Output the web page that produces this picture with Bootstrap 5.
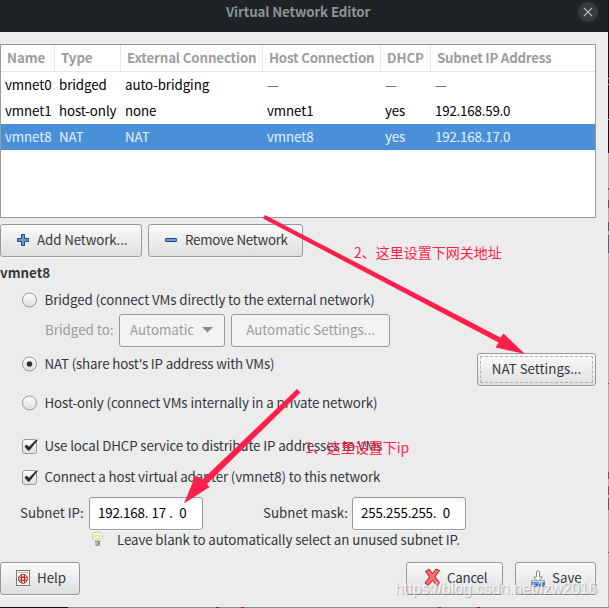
<!DOCTYPE html>
<html lang="en">
<head>
<meta charset="utf-8">
<meta name="viewport" content="width=device-width, initial-scale=1">
<title>Virtual Network Editor</title>
<link href="https://cdn.jsdelivr.net/npm/bootstrap@5.3.0/dist/css/bootstrap.min.css" rel="stylesheet">
<style>
  body { width: 609px; height: 608px; background: #ececec; color: #33393b; font-family: "Noto Sans CJK SC", sans-serif; font-size: 13.33px; line-height: 20px; white-space: nowrap; }
  .titlebar { height: 32px; background: #1f2226; color: #8b9396; padding: 0 0 8px 226px; letter-spacing: -.14px; }
  .close-btn { top: 2px; right: 11px; width: 20px; height: 20px; }
  .close-btn svg { display: block; }
  .main-area { padding-top: 12px; }
  .net-frame { width: 596px; height: 174px; background: #fff; border: 1px solid #999; }
  .net-table { table-layout: fixed; width: 594px; border-collapse: separate; border-spacing: 0; color: #000; letter-spacing: -.1px; }
  .net-table th { height: 27px; padding: 0 0 0 6px; color: #9b9d9e; border-right: 1px solid #e6e6e6; border-bottom: 1px solid #e6e6e6; }
  .net-table th:nth-child(3) { letter-spacing: -.16px; }
  .net-table th:nth-child(4) { letter-spacing: -.22px; }
  .net-table th:last-child { border-right: 0; letter-spacing: -.26px; }
  .net-table td { height: 26px; padding: 0 0 0 4px; }
  .net-table td:last-child { letter-spacing: -.2px; }
  .net-table td.unset { color: #555; }
  .net-table .picked td { background: #4a90d9; color: #e3f0ff; }
  .toolbar-row { gap: 6px; margin-top: 6px; }
  .gtk-btn { --bs-btn-padding-x: 0; --bs-btn-padding-y: 0; --bs-btn-font-size: 13.33px; --bs-btn-line-height: 20px; --bs-btn-color: #33393b; --bs-btn-border-color: #999; --bs-btn-border-radius: 3px; height: 33px; padding-bottom: 2px; background: linear-gradient(#fafafa, #dfdfdf); box-shadow: 0 1px #f8f8f8; }
  .gtk-off { background: #f3f3f3; color: #999c9d; box-shadow: none; }
  .w-add { width: 142px; letter-spacing: -.12px; } .w-remove { width: 155px; letter-spacing: -.27px; }
  .w-auto-sel { width: 106px; padding: 0 11px 2px 10px; } .w-auto-set { width: 159px; }
  .w-nat { width: 119px; padding: 0; } .w-help { width: 80px; } .w-cancel { width: 97px; letter-spacing: -.25px; } .w-save { width: 81px; margin-left: 12px; }
  .focus-dash { border: 1px dashed #b4b4b4; border-radius: 1px; margin: 2px; height: 27px; line-height: 23px; }
  .btn-glyph { margin: 1px 7px 0 15px; flex: none; }
  .cancel-glyph { margin: -1px 6px 0 17px; flex: none; }
  .opt-row { height: 22px; padding-left: 22px; gap: 6.5px; letter-spacing: -.13px; }
  .opt-row svg { display: block; width: 16px; height: 16px; overflow: visible; }
  .bridged-opt { letter-spacing: -.1px; }
  .group-title { height: 32px; }
  .bridge-row { margin-top: 3px; padding-left: 45px; height: 33px; gap: 6px; color: #999c9d; }
  .bridge-label { width: 68px; padding-bottom: 2px; }
  .nat-row { margin-top: 6px; height: 33px; width: 596px; }
  .nat-opt { letter-spacing: -.17px; }
  .host-row { margin-top: 6px; letter-spacing: -.09px; }
  .dhcp-row { margin-top: 21px; }
  .adapter-row { margin-top: 9px; }
  .subnet-row { margin-top: 9px; height: 33px; padding-left: 20px; }
  .ip-box { width: 114px; height: 33px; border: 1px solid #999; border-radius: 3px; background: linear-gradient(#f5f5f5, #fff 7px); color: #000; padding-left: 8px; white-space: pre; line-height: 29px; letter-spacing: -.2px; word-spacing: .5px; box-shadow: 0 1px #f8f8f8; }
  .ip-label { width: 69px; padding-bottom: 2px; } .mask-label { width: 89px; margin-left: 60px; padding-bottom: 2px; }
  .hint-row { height: 21px; padding: 0 0 2px 91px; letter-spacing: -.11px; }
  .hint-row svg { width: 13px; height: 16px; margin: -2px 13px 0 0; }
  .action-row { margin-top: 11px; width: 596px; }
  .overlay { left: 0; top: 0; pointer-events: none; }
  .note { color: #ff1f4b; font-size: 14px; line-height: 20px; }
  .note-gateway { left: 354px; top: 242px; }
  .note-ip { left: 305px; top: 437px; }
  .blog-stamp { left: 395px; top: 579px; font-family: "Liberation Sans", sans-serif; font-size: 15.7px; color: rgba(255,255,255,.78); text-shadow: 1px 1px 1px rgba(0,0,0,.25); }
</style>
<script src="https://cdn.jsdelivr.net/npm/bootstrap@5.3.0/dist/js/bootstrap.bundle.min.js"></script>
</head>
<body class="position-relative overflow-hidden">
<header class="titlebar position-relative d-flex align-items-center fw-bold">
  <span>Virtual Network Editor</span>
  <span class="close-btn position-absolute">
    <svg width="20" height="20"><circle cx="10" cy="10" r="10" fill="#363a3e"/><path d="M6 6l8 8M14 6l-8 8" stroke="#b5b9bb" stroke-width="1.1"/></svg>
  </span>
</header>
<main class="main-area">
  <div class="net-frame">
    <table class="net-table">
      <colgroup><col style="width:54px"><col style="width:66px"><col style="width:142px"><col style="width:118px"><col style="width:50px"><col></colgroup>
      <thead><tr><th>Name</th><th>Type</th><th>External Connection</th><th>Host Connection</th><th>DHCP</th><th>Subnet IP Address</th></tr></thead>
      <tbody>
        <tr><td>vmnet0</td><td>bridged</td><td>auto-bridging</td><td class="unset">—</td><td class="unset">—</td><td class="unset">—</td></tr>
        <tr><td>vmnet1</td><td>host-only</td><td>none</td><td>vmnet1</td><td>yes</td><td>192.168.59.0</td></tr>
        <tr class="picked"><td>vmnet8</td><td>NAT</td><td>NAT</td><td>vmnet8</td><td>yes</td><td>192.168.17.0</td></tr>
      </tbody>
    </table>
  </div>
  <div class="toolbar-row d-flex">
    <button class="btn gtk-btn w-add d-flex align-items-center"><svg class="btn-glyph" width="14" height="14"><path d="M5.500 1.500h3v4h4v3h-4v4h-3v-4h-4v-3h4z" fill="#6f9bd0" stroke="#204a87"/></svg>Add Network...</button>
    <button class="btn gtk-btn w-remove d-flex align-items-center"><svg class="btn-glyph" width="14" height="14"><rect x="1.500" y="5.500" width="11" height="3" rx=".5" fill="#6f9bd0" stroke="#204a87"/></svg>Remove Network</button>
  </div>
  <div class="group-title d-flex align-items-center fw-bold">vmnet8</div>
  <div class="opt-row bridged-opt d-flex align-items-center">
    <svg viewBox="0 0 16 16"><defs><linearGradient id="knob" x2="0" y2="1"><stop stop-color="#fff"/><stop offset="1" stop-color="#ddd"/></linearGradient></defs><circle cx="7.500" cy="8" r="7" fill="url(#knob)" stroke="#999"/></svg>
    <span>Bridged (connect VMs directly to the external network)</span>
  </div>
  <div class="bridge-row d-flex align-items-center">
    <span class="bridge-label">Bridged to:</span>
    <button class="btn gtk-btn gtk-off w-auto-sel d-flex align-items-center justify-content-between">Automatic<svg width="11" height="6"><path d="M0 0h11L5.500 5.500z" fill="#888d8e"/></svg></button>
    <button class="btn gtk-btn gtk-off w-auto-set">Automatic Settings...</button>
  </div>
  <div class="nat-row d-flex justify-content-between">
    <div class="opt-row nat-opt d-flex align-items-center">
      <svg viewBox="0 0 16 16"><circle cx="7.500" cy="8" r="7" fill="url(#knob)" stroke="#999"/><circle cx="7.500" cy="8" r="2.800" fill="#2b3032"/></svg>
      <span>NAT (share host's IP address with VMs)</span>
    </div>
    <button class="btn gtk-btn w-nat"><div class="focus-dash">NAT Settings...</div></button>
  </div>
  <div class="opt-row host-row d-flex align-items-center">
    <svg viewBox="0 0 16 16"><circle cx="7.500" cy="8" r="7" fill="url(#knob)" stroke="#999"/></svg>
    <span>Host-only (connect VMs internally in a private network)</span>
  </div>
  <div class="opt-row dhcp-row d-flex align-items-center">
    <svg viewBox="0 0 16 16"><rect x=".5" y="1.500" width="14" height="14" rx="2.500" fill="url(#knob)" stroke="#999"/><path d="M2.500 8.500l2-1.900L7 8.800 14 1.800h2L7.500 12.500H5.800z" fill="#2b3032"/></svg>
    <span>Use local DHCP service to distribute IP addresses to VMs</span>
  </div>
  <div class="opt-row adapter-row d-flex align-items-center">
    <svg viewBox="0 0 16 16"><rect x=".5" y="1.500" width="14" height="14" rx="2.500" fill="url(#knob)" stroke="#999"/><path d="M2.500 8.500l2-1.900L7 8.800 14 1.800h2L7.500 12.500H5.800z" fill="#2b3032"/></svg>
    <span>Connect a host virtual adapter (vmnet8) to this network</span>
  </div>
  <div class="subnet-row d-flex align-items-center">
    <span class="ip-label">Subnet IP:</span><div class="ip-box">192.168. 17 .  0</div>
    <span class="mask-label">Subnet mask:</span><div class="ip-box">255.255.255.  0</div>
  </div>
  <div class="hint-row d-flex align-items-center">
    <svg viewBox="0 0 13 16"><path d="M4 10C0 6 1 .8 6.500.8S13 6 9 10z" fill="#f6f5cf" stroke="#b9b9ae" stroke-width=".8"/><path d="M4.500 4.500h4L7.500 9h-2z" fill="#fffde0" stroke="#d9d27a" stroke-width=".8"/><path d="M4 10h5v3.500L7.500 15h-2L4 13.500z" fill="#8a8d88"/><path d="M4 11.500h3M4 13h3" stroke="#e4e4e4" stroke-width=".8"/></svg>
    <span>Leave blank to automatically select an unused subnet IP.</span>
  </div>
  <div class="action-row d-flex">
    <button class="btn gtk-btn w-help d-flex align-items-center"><svg class="btn-glyph" width="14" height="16"><rect x=".5" y=".5" width="13" height="15" fill="#fafafa" stroke="#777b77"/><path d="M2 2.500h10" stroke="#bbb"/><circle cx="7" cy="8.800" r="4.500" fill="#f6dede" stroke="#b8292d"/><circle cx="7" cy="8.800" r="1.900" fill="#f4f4f4" stroke="#b8292d"/><path d="M5.500 4.500v8.600M8.500 4.500v8.600M2.700 7.300h8.600M2.700 10.300h8.600" stroke="#b8292d" stroke-width=".9"/></svg>Help</button>
    <button class="btn gtk-btn w-cancel d-flex align-items-center ms-auto"><svg class="cancel-glyph" width="17" height="19" viewBox="0 0 17 19"><path d="M1.500 3.500L5 1l3.500 4.500L12 1l3.500 1.500L11 9l4.500 5.500L13 17.500 8.500 12.500 4 17.500 1 15l4.500-6z" fill="#f26d6d" stroke="#b8181c" stroke-linejoin="round"/></svg>Cancel</button>
    <button class="btn gtk-btn w-save d-flex align-items-center"><svg class="btn-glyph" width="14" height="17" viewBox="0 0 14 17"><path d="M1 10.500h12l.5 5.500H.5z" fill="#5b8fd0" stroke="#3465a4"/><path d="M1 10.500h12v1.500H1z" fill="#d7e4f3"/><path d="M5.500 1.500q1.500-1.500 3 0V7h3L7 11.500 2.500 7h3z" fill="#fff" stroke="#888a85"/><path d="M5 14.500h4" stroke="#204a87"/></svg>Save</button>
  </div>
</main>
<svg class="overlay position-absolute" width="609" height="608">
  <path d="M608.500 0v608" stroke="#b0b0b0"/>
  <path d="M608.500 0v153" stroke="#15181b"/>
  <path d="M608.500 78v1M608.500 84v1M608.500 119v1" stroke="#999"/>
  <path d="M608.500 188v2M608.500 200v8M608.500 222v9M608.500 383v1M608.500 498v12M608.500 552v1" stroke="#55585b"/>
  <path d="M608.500 235v18" stroke="#1a72b5"/><path d="M608.500 472v7M608.500 486v9" stroke="#b23a50"/>
  <path d="M0 607.500h609" stroke="#8b8b8b"/><path d="M0 607.500h68" stroke="#111"/><path d="M216 607.500h3M241 607.500h3M438 607.500h3M477 607.500h3" stroke="#8d1f2d"/>
  <g fill="#ff1f4b"><path d="M265 215l235.500 122.500 3-4L525 354l-29.500-6.500 3-5L263 218.500z"/><path d="M297 389l3.500 3.500-93.500 91.500 2.500 3L184 503.500l11.500-28 7 4z"/></g>
</svg>
<div class="note note-gateway position-absolute">2、这里设置下网关地址</div>
<div class="note note-ip position-absolute">1、这里设置下ip</div>
<div class="blog-stamp position-absolute">https://blog.csdn.net/lzw2016</div>
</body>
</html>
